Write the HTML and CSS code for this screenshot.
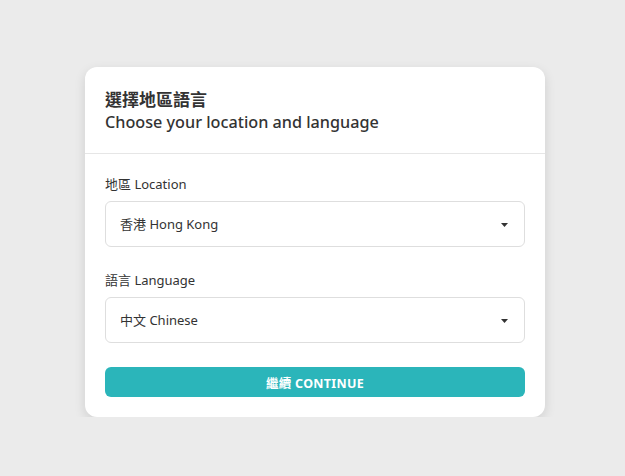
FILE: index.html
```html
<!DOCTYPE html>
<html lang="zh-Hant">
<head>
  <meta charset="UTF-8" />
  <title>選擇地區語言</title>
  <link rel="stylesheet" href="styles.css">
</head>
<body>
  <div class="page">
    <div class="card">
      <div class="card-header">
        <h1>選擇地區語言</h1>
        <h2>Choose your location and language</h2>
      </div>
      <div class="card-body">
        <label class="field-label" for="location">地區 Location</label>
        <div class="select-wrap">
          <select id="location" class="select">
            <option>香港 Hong Kong</option>
          </select>
          <svg class="caret" width="7" height="4" viewBox="0 0 7 4"><path d="M0 0h7L3.5 4z" fill="#333"/></svg>
        </div>

        <label class="field-label" for="language">語言 Language</label>
        <div class="select-wrap">
          <select id="language" class="select">
            <option>中文 Chinese</option>
          </select>
          <svg class="caret" width="7" height="4" viewBox="0 0 7 4"><path d="M0 0h7L3.5 4z" fill="#333"/></svg>
        </div>

        <button class="btn-continue">繼續 CONTINUE</button>
      </div>
    </div>
  </div>
</body>
</html>
```

FILE: styles.css
```css
* {
  margin: 0;
  padding: 0;
  box-sizing: border-box;
}

body {
  background: #ebebeb;
  color: #333;
  font-family: 'Noto Sans', 'Open Sans', 'Noto Sans CJK TC', sans-serif;
}

.page {
  display: flex;
  justify-content: center;
  padding: 67px 0 0 5px;
}

.card {
  width: 460px;
  background: #fff;
  border-radius: 12px;
  box-shadow: 0 4px 12px rgba(0, 0, 0, 0.12);
}

.card-header {
  padding: 22px 20px 20px;
  border-bottom: 1px solid #e6e6e6;
}

h1 {
  font-size: 17px;
  font-weight: bold;
  line-height: 22px;
  color: #333;
}

h2 {
  font-size: 16.2px;
  font-weight: 500;
  line-height: 22px;
  color: #333;
}

.card-body {
  padding: 21px 20px 20px;
  display: flex;
  flex-direction: column;
}

.field-label {
  font-size: 13px;
  line-height: 18px;
  margin-bottom: 8px;
}

.select-wrap {
  position: relative;
  margin-bottom: 24px;
}

.select {
  appearance: none;
  -webkit-appearance: none;
  width: 100%;
  height: 46px;
  padding: 0 14px;
  border: 1px solid #dedede;
  border-radius: 6px;
  background: #fff;
  font-family: inherit;
  font-size: 13px;
  color: #333;
  outline: none;
}

.caret {
  position: absolute;
  right: 17px;
  top: 22px;
  pointer-events: none;
}

.btn-continue {
  height: 30px;
  border: none;
  border-radius: 6px;
  background: #2bb5ba;
  color: #fff;
  font-family: inherit;
  font-size: 12.5px;
  font-weight: bold;
  letter-spacing: 0.3px;
}
```
